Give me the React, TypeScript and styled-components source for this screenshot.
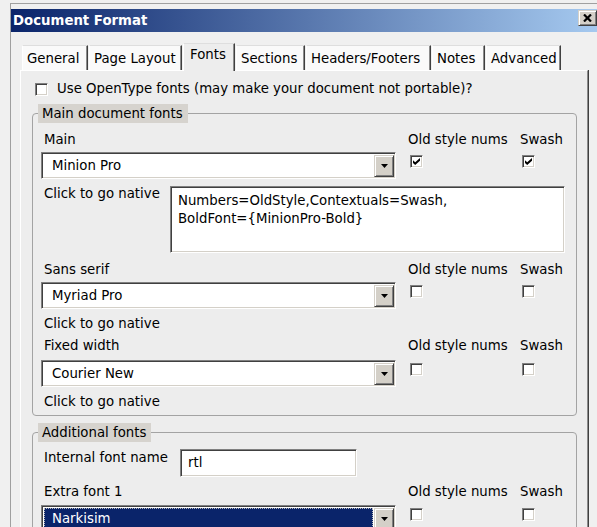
import React from "react";
import styled, { createGlobalStyle, css } from "styled-components";

const GlobalStyle = createGlobalStyle`
  *, *::before, *::after { box-sizing: border-box; }
  html, body { margin: 0; padding: 0; }
  body {
    background: #f0f0f0;
    overflow: hidden;
    font-family: "DejaVu Sans", Tahoma, Verdana, sans-serif;
    font-size: 13.3px;
    line-height: 16px;
    color: #000;
  }
`;

/* classic 3D edges */
const sunken = css`
  background: #fff;
  border: 1px solid;
  border-color: #808080 #ffffff #ffffff #808080;
  box-shadow: inset 1px 1px 0 #404040, inset -1px -1px 0 #d4d0c8;
`;

const raised = css`
  background: #d4d0c8;
  border: 1px solid;
  border-color: #d4d0c8 #404040 #404040 #d4d0c8;
  box-shadow: inset 1px 1px 0 #ffffff, inset -1px -1px 0 #808080;
`;

const Window = styled.div`
  width: 590px;
  min-height: 540px;
  margin: 3px 0 0 10px;
  padding-top: 5px;
  border-top: 1px solid #a0a0a0;
  border-left: 1px solid #a0a0a0;
  background: #f0f0f0;
`;

const TitleBar = styled.div`
  height: 23px;
  display: flex;
  align-items: center;
  justify-content: space-between;
  padding: 0 3px 0 2px;
  background: linear-gradient(to right, #0a246a, #a6caf0);
`;

const Title = styled.span`
  color: #fff;
  font-weight: bold;
`;

const CloseButton = styled.button`
  ${raised};
  align-self: flex-start;
  margin-top: 1px;
  width: 19px;
  height: 16px;
  padding: 0;
  display: flex;
  align-items: center;
  justify-content: center;
`;

const DialogBody = styled.div`
  padding: 11px 0 0 9px;
`;

const TabStrip = styled.div`
  display: flex;
  align-items: flex-end;
  height: 27px;
  padding-left: 2px;
  position: relative;
  z-index: 1;
`;

const Tab = styled.div<{ $width: number; $active?: boolean }>`
  width: ${(p) => p.$width}px;
  height: ${(p) => (p.$active ? 28 : 25)}px;
  margin: 0 1px ${(p) => (p.$active ? -1 : 0)}px 0;
  padding: ${(p) => (p.$active ? "3px 0 0 6px" : "5px 0 0 4px")};
  background: ${(p) => (p.$active ? "#ededed" : "#fafafa")};
  border-top: 1px solid #dedede;
  border-left: 1px solid #ffffff;
  border-right: 1px solid #404040;
  box-shadow: inset -1px 0 0 #8c8c8c;
  white-space: nowrap;
`;

const Panel = styled.div`
  width: 568px;
  min-height: 470px;
  padding: 10px 10px 0 11px;
  background: #ededed;
  border-top: 1px solid #ffffff;
  border-left: 1px solid #ffffff;
  border-right: 1px solid #8c8c8c;
  box-shadow: 1px 0 0 #404040;
`;

const OptionRow = styled.label`
  display: flex;
  align-items: center;
  gap: 9px;
  height: 16px;
  padding-left: 3px;
`;

const Box = styled.span`
  ${sunken};
  width: 13px;
  height: 13px;
  flex: none;
  display: inline-flex;
  align-items: center;
  justify-content: center;
`;

const Group = styled.fieldset<{ $padTop: number }>`
  margin: 7px 0 0;
  padding: ${(p) => p.$padTop}px 10px 5px 8px;
  border: 1px solid #a3a3a3;
  border-radius: 4px;
  min-width: 0;
`;

const GroupTitle = styled.legend`
  margin-left: -3px;
  padding: 0 5px 0 4px;
  height: 19px;
  line-height: 19px;
  background: #d6d3ce;
`;

const FieldGrid = styled.div<{ $top?: number }>`
  display: grid;
  grid-template-columns: 367px 112px 1fr;
  align-items: start;
  margin-top: ${(p) => p.$top ?? 0}px;
`;

const FieldLabel = styled.div<{ $top?: number; $width?: number }>`
  padding-left: 3px;
  margin-top: ${(p) => p.$top ?? 0}px;
  ${(p) => p.$width && `width: ${p.$width}px; flex: none;`}
  white-space: nowrap;
`;

const ColumnHead = styled.div`
  white-space: nowrap;
`;

const CheckCell = styled.div`
  display: flex;
  padding: 3px 0 0 2px;
`;

const Dropdown = styled.div`
  ${sunken};
  width: 355px;
  height: 27px;
  display: flex;
  padding: 2px 1px 1px 2px;
`;

const DropValue = styled.div<{ $selected?: boolean }>`
  flex: 1;
  display: flex;
  align-items: center;
  padding-left: 8px;
  margin-right: 1px;
  ${(p) =>
    p.$selected &&
    css`
      background: #0a246a;
      color: #fff;
      outline: 1px dotted #b8b8b8;
      outline-offset: -1px;
    `}
`;

const DropButton = styled.div`
  ${raised};
  width: 20px;
  display: flex;
  align-items: center;
  justify-content: center;
`;

const Row = styled.div<{ $top?: number }>`
  display: flex;
  align-items: flex-start;
  margin-top: ${(p) => p.$top ?? 0}px;
`;

const TextBox = styled.div`
  ${sunken};
  width: 395px;
  height: 67px;
  padding: 5px 7px;
  line-height: 18px;
  white-space: pre-line;
`;

const TextInput = styled.div`
  ${sunken};
  width: 177px;
  height: 28px;
  padding-left: 7px;
  line-height: 26px;
`;

const CheckMark = () => (
  <svg width="7" height="7" viewBox="0 0 7 7" aria-hidden="true">
    <path d="M0 2.2 L2.2 4.3 L7 0 L7 2.8 L2.2 7 L0 4.9 Z" fill="#000" />
  </svg>
);

const CheckBox = ({ checked }: { checked?: boolean }) => <Box>{checked && <CheckMark />}</Box>;

const Arrow = () => (
  <svg width="7" height="4" viewBox="0 0 7 4" aria-hidden="true">
    <polygon points="0,0 7,0 3.5,4" fill="#000" />
  </svg>
);

const CloseGlyph = () => (
  <svg width="9" height="8" viewBox="0 0 9 8" aria-hidden="true">
    <path d="M1 0.5 L8 7.5 M8 0.5 L1 7.5" stroke="#000" strokeWidth="2.2" />
  </svg>
);

type FontSlot = {
  label: string;
  font: string;
  oldStyle?: boolean;
  swash?: boolean;
  features?: string;
  native?: boolean;
  selected?: boolean;
  headTop: number;
  selectTop: number;
};

const TABS = [
  { label: "General", width: 66 },
  { label: "Page Layout", width: 93 },
  { label: "Fonts", width: 52, active: true },
  { label: "Sections", width: 69 },
  { label: "Headers/Footers", width: 125 },
  { label: "Notes", width: 53 },
  { label: "Advanced", width: 75 },
];

const MAIN_SLOTS: FontSlot[] = [
  {
    label: "Main",
    font: "Minion Pro",
    oldStyle: true,
    swash: true,
    features: "Numbers=OldStyle,Contextuals=Swash,\nBoldFont={MinionPro-Bold}",
    native: true,
    headTop: 0,
    selectTop: 4,
  },
  { label: "Sans serif", font: "Myriad Pro", native: true, headTop: 9, selectTop: 4 },
  { label: "Fixed width", font: "Courier New", native: true, headTop: 6, selectTop: 6 },
];

const EXTRA_SLOT: FontSlot = {
  label: "Extra font 1",
  font: "Narkisim",
  selected: true,
  headTop: 7,
  selectTop: 5,
};

const FontSlotBlock = ({ slot }: { slot: FontSlot }) => (
  <>
    <FieldGrid $top={slot.headTop}>
      <FieldLabel>{slot.label}</FieldLabel>
      <ColumnHead>Old style nums</ColumnHead>
      <ColumnHead>Swash</ColumnHead>
    </FieldGrid>
    <FieldGrid $top={slot.selectTop}>
      <Dropdown>
        <DropValue $selected={slot.selected}>{slot.font}</DropValue>
        <DropButton>
          <Arrow />
        </DropButton>
      </Dropdown>
      <CheckCell>
        <CheckBox checked={slot.oldStyle} />
      </CheckCell>
      <CheckCell>
        <CheckBox checked={slot.swash} />
      </CheckCell>
    </FieldGrid>
    {slot.features ? (
      <Row $top={7}>
        <FieldLabel $width={129}>Click to go native</FieldLabel>
        <TextBox>{slot.features}</TextBox>
      </Row>
    ) : (
      slot.native && <FieldLabel $top={7}>Click to go native</FieldLabel>
    )}
  </>
);

export default function App() {
  return (
    <>
      <GlobalStyle />
      <Window>
        <TitleBar>
          <Title>Document Format</Title>
          <CloseButton aria-label="Close">
            <CloseGlyph />
          </CloseButton>
        </TitleBar>
        <DialogBody>
          <TabStrip>
            {TABS.map((t) => (
              <Tab key={t.label} $width={t.width} $active={t.active}>
                {t.label}
              </Tab>
            ))}
          </TabStrip>
          <Panel>
            <OptionRow>
              <CheckBox />
              <span>Use OpenType fonts (may make your document not portable)?</span>
            </OptionRow>
            <Group $padTop={9}>
              <GroupTitle>Main document fonts</GroupTitle>
              {MAIN_SLOTS.map((slot) => (
                <FontSlotBlock key={slot.label} slot={slot} />
              ))}
            </Group>
            <Group $padTop={7}>
              <GroupTitle>Additional fonts</GroupTitle>
              <Row>
                <FieldLabel $width={139} $top={1}>
                  Internal font name
                </FieldLabel>
                <TextInput>rtl</TextInput>
              </Row>
              <FontSlotBlock slot={EXTRA_SLOT} />
            </Group>
          </Panel>
        </DialogBody>
      </Window>
    </>
  );
}
